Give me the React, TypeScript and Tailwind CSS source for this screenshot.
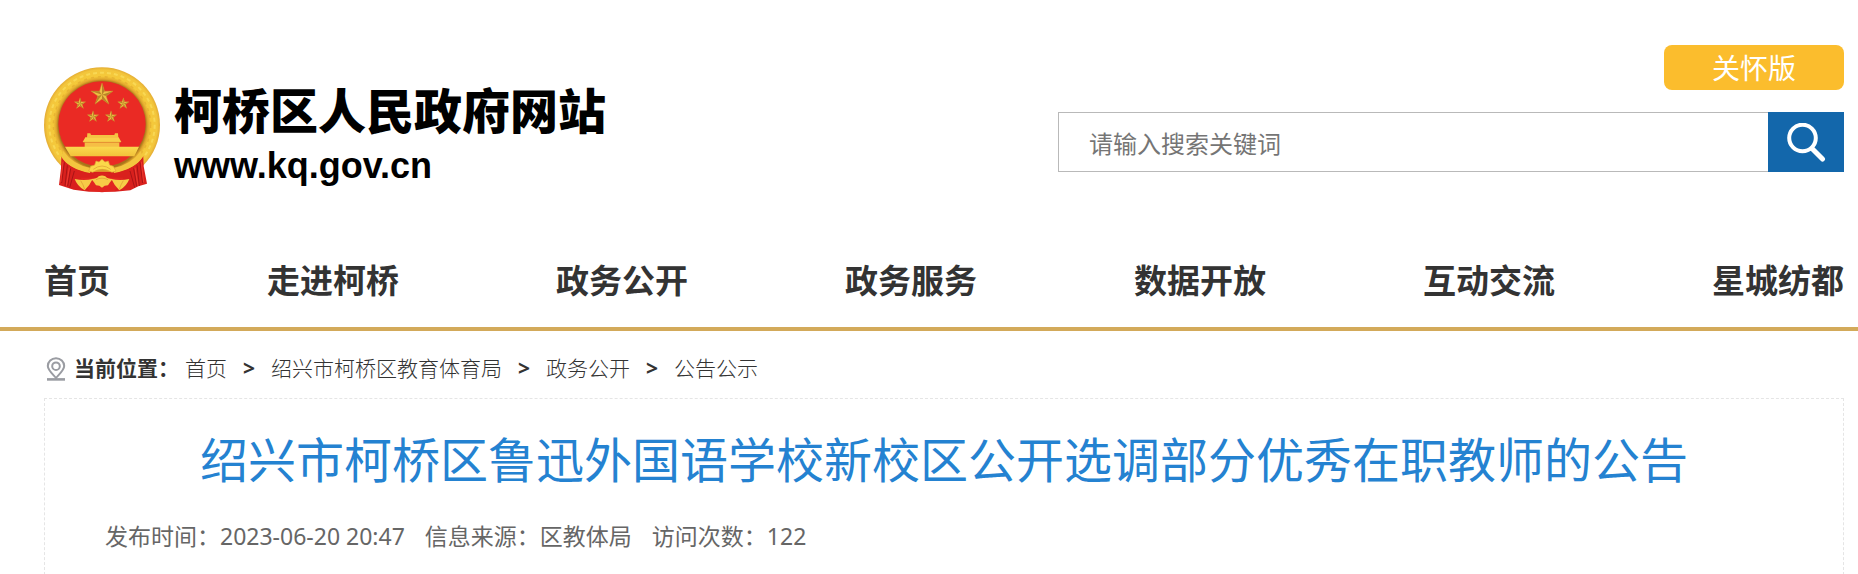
const navItems = ["首页", "走进柯桥", "政务公开", "政务服务", "数据开放", "互动交流", "星城纺都"];

const crumbs = ["首页", "绍兴市柯桥区教育体育局", "政务公开", "公告公示"];

const meta = [
    { label: "发布时间", value: "2023-06-20 20:47" },
    { label: "信息来源", value: "区教体局" },
    { label: "访问次数", value: "122" },
];

const starPath = "M0,-10 L2.2,-3 L9.5,-3.1 L3.6,1.2 L5.9,8.1 L0,3.8 L-5.9,8.1 L-3.6,1.2 L-9.5,-3.1 L-2.2,-3 Z";

const stars = [
    "translate(216 133) scale(3.5)",
    "translate(150 160) scale(1.8)",
    "translate(280 160) scale(1.8)",
    "translate(189 199) scale(1.8)",
    "translate(243 199) scale(1.8)",
];

const Emblem = () => (
    <svg viewBox="42 50 348 378" className="w-[116px] h-[126px] shrink-0" aria-hidden="true">
        <defs>
            <radialGradient id="ring" gradientUnits="userSpaceOnUse" cx="216" cy="224" r="174">
                <stop offset="0.75" stopColor="#a8741a" />
                <stop offset="0.79" stopColor="#dfa52c" />
                <stop offset="0.84" stopColor="#f5c93a" />
                <stop offset="0.95" stopColor="#f3c63c" />
                <stop offset="1" stopColor="#e3ab34" />
            </radialGradient>
            <linearGradient id="gate" x1="0" y1="0" x2="0" y2="1">
                <stop offset="0" stopColor="#fbd94e" />
                <stop offset="1" stopColor="#f2c13a" />
            </linearGradient>
        </defs>
        <ellipse cx="216" cy="224" rx="174" ry="173" fill="url(#ring)" />
        <ellipse cx="216" cy="224" rx="158" ry="157" fill="none" stroke="#fbe266" strokeWidth="6" strokeDasharray="12 9" opacity="0.6" />
        <ellipse cx="216" cy="224" rx="146" ry="145" fill="none" stroke="#dda02b" strokeWidth="4" strokeDasharray="9 12" opacity="0.5" />
        <ellipse cx="216" cy="221" rx="131" ry="128" fill="#ea2a24" />
        {stars.map((t) => (
            <g key={t} transform={t}>
                <path d={starPath} fill="#edc044" stroke="#c98a2c" strokeWidth="0.4" />
                <path d="M0,0 L0,-10 L2.2,-3Z M0,0 L9.5,-3.1 L3.6,1.2Z M0,0 L5.9,8.1 L0,3.8Z M0,0 L-5.9,8.1 L-3.6,1.2Z M0,0 L-9.5,-3.1 L-2.2,-3Z" fill="#b98428" />
            </g>
        ))}
        {/* gate tower */}
        <path d="M172 249h9l2 5h70l2-5h9l1 13h-94z" fill="#f4c343" />
        <path d="M166 261h100l8 14h-116z" fill="#f9cf4b" />
        <path d="M164 276h104v14h-104z" fill="#f6be45" />
        <path d="M160 276h112" stroke="#dd8f2c" strokeWidth="2" />
        <path d="M105 289h222l-14 29H122z" fill="url(#gate)" />
        {/* ribbon drawn over the bottom of the ring */}
        <path d="M94 318q22 36 74 46h96q52-10 76-46l1 30 10 52-26 8-24 12-46 4h-78l-46-6-44-14 6-50z" fill="#d9201d" />
        <path d="M103 336l-8 62M112 345l-7 62M122 354l-9 54M133 362l-14 50M330 336l8 62M321 345l7 62M311 354l9 54M300 362l14 50" stroke="#a81416" strokeWidth="3" />
        <path d="M99 334l-7 62M118 352l-9 54M334 334l7 62M315 352l9 54" stroke="#ee3a2e" strokeWidth="3" />
        <path d="M152 382h128l-26 40-38 4-38-4z" fill="#e12521" />
        {/* lower wreath and gear */}
        <path d="M100 302q26 40 84 52l-4 14q-62-12-86-48z" fill="#f3c53f" />
        <path d="M332 302q-26 40-84 52l4 14q62-12 86-48z" fill="#f3c53f" />
        <path d="M176 362l6-14 12-4 4-12 9 3 9-8 9 8 10-3 4 12 11 4 8 14-12 4q-30-18-58 0z" fill="#fbd74a" stroke="#dfa033" strokeWidth="2" />
        <path d="M190 357q26-20 52 0" stroke="#dd9c30" strokeWidth="2" fill="none" />
        <path d="M186 374q30-16 60 0-30 10-60 0z" fill="#d9241e" />
        {/* tassels either side of the small gear */}
        <path d="M134 386q28 6 54 0-8 18-24 34-22-12-30-34z" fill="#f7cc47" />
        <path d="M298 386q-28 6-54 0 8 18 24 34 22-12 30-34z" fill="#f7cc47" />
        <path d="M152 391q8 12 12 26M280 391q-8 12-12 26" stroke="#d99a30" strokeWidth="2" fill="none" />
        <path d="M184 386q16 0 22-8 10-5 20 0 6 8 22 8l-8 10-6 9-10 1-8 6-8-6-10-1-6-9z" fill="#f7cc47" />
        <path d="M198 388q18-9 36 0" stroke="#d99a30" strokeWidth="2" fill="none" />
    </svg>
);

const SearchIcon = () => (
    <svg viewBox="0 0 39 39" className="w-[39px] h-[39px]" fill="none" stroke="#fff" aria-hidden="true">
        <circle cx="15.5" cy="15" r="13.3" strokeWidth="4" />
        <path d="M25.5 26l10 10" strokeWidth="5" strokeLinecap="round" />
    </svg>
);

const PinIcon = () => (
    <svg viewBox="0 0 20 24" className="w-5 h-6 shrink-0 ml-0.5" fill="none" stroke="#9a9ca2" strokeWidth="2" aria-hidden="true">
        <path d="M10 21C7 17.5 1.8 13 1.8 9a8.2 7.8 0 0 1 16.4 0C18.2 13 13 17.5 10 21z" />
        <circle cx="10" cy="9.2" r="3.8" />
        <path d="M1 22.4h18" strokeWidth="2.6" />
    </svg>
);

const Header = () => (
    <header className="flex justify-between pl-11 pr-3.5 pt-[45px]">
        <a href="#" className="flex pt-[22px] text-black">
            <Emblem />
            <div className="ml-3.5 pt-3.5">
                <p className="text-[48px] leading-[60px] font-black">柯桥区人民政府网站</p>
                <p className="font-['Liberation_Sans',sans-serif] text-4xl leading-[50px] font-bold">www.kq.gov.cn</p>
            </div>
        </a>
        <div className="flex flex-col items-end w-[786px]">
            <button className="w-[180px] h-[45px] rounded-lg bg-[#fbbd2d] text-white text-[28px] leading-[47px]">关怀版</button>
            <form className="flex w-full h-[60px] mt-[22px]">
                <input
                    type="text"
                    aria-label="搜索"
                    placeholder="请输入搜索关键词"
                    className="flex-1 min-w-0 border border-r-0 border-[#b9b9b9] pl-[30px] pt-1 text-2xl placeholder:text-[#757575] outline-none"
                />
                <button type="button" aria-label="搜索" className="flex items-center justify-center w-[76px] bg-[#1367ab]">
                    <SearchIcon />
                </button>
            </form>
        </div>
    </header>
);

const Breadcrumb = () => (
    <div className="flex items-center h-[67px] pt-2 text-[21px] text-[#333]">
        <PinIcon />
        <span className="ml-2 mr-1.5 font-bold">当前位置：</span>
        {crumbs.map((name, index) => (
            <span key={name} className="flex items-center">
                {index > 0 && <span className="mx-4 font-bold">&gt;</span>}
                <a href="#" className="font-light">{name}</a>
            </span>
        ))}
    </div>
);

const App = () => {
    return (
        <div className="bg-white font-['Noto_Sans','Noto_Sans_CJK_SC',sans-serif]" lang="zh-CN">
            <Header />
            <nav className="flex justify-between pl-11 pr-3.5 pt-[63px] pb-[21px] border-b-4 border-[#d3aa5a]">
                {navItems.map((item) => (
                    <a key={item} href="#" className="text-[33px] leading-[50px] font-bold text-[#333]">{item}</a>
                ))}
            </nav>
            <main className="pl-11 pr-3.5">
                <Breadcrumb />
                <article className="border border-b-0 border-dashed border-[#e5e5e5] px-[60px] pt-[26px] pb-[22px]">
                    <h1 className="text-5xl leading-[70px] text-center text-[#2482d1]">绍兴市柯桥区鲁迅外国语学校新校区公开选调部分优秀在职教师的公告</h1>
                    <div className="flex gap-5 mt-6 text-[23px] leading-[34px] text-[#666]">
                        {meta.map((m) => (
                            <span key={m.label}>{m.label}：{m.value}</span>
                        ))}
                    </div>
                </article>
            </main>
        </div>
    );
};

export default App;
